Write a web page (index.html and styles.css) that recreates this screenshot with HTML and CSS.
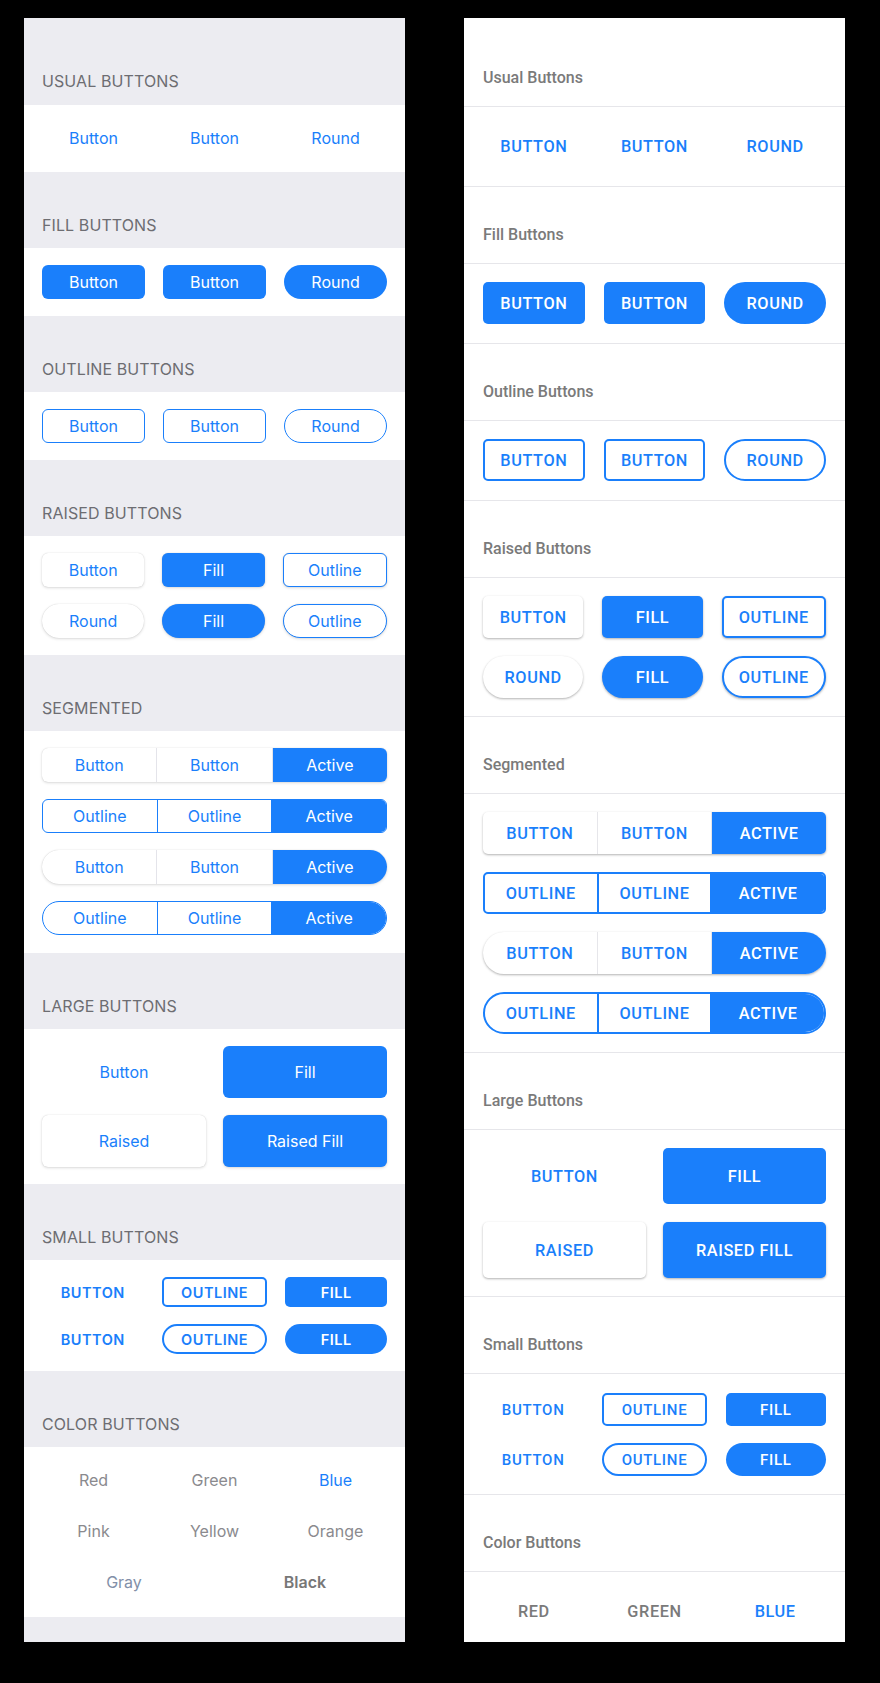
FILE: index.html
```html
<!DOCTYPE html>
<html>
<head>
<meta charset="utf-8">
<link rel="stylesheet" href="styles.css">
</head>
<body>
<div class="stage">
  <div class="panel ios">
    <div class="ititle first">Usual Buttons</div>
    <div class="iblock">
      <div class="row">
        <span class="ib">Button</span><span class="ib">Button</span><span class="ib round">Round</span>
      </div>
    </div>
    <div class="ititle">Fill Buttons</div>
    <div class="iblock pb">
      <div class="row">
        <span class="ib fill">Button</span><span class="ib fill">Button</span><span class="ib fill round">Round</span>
      </div>
    </div>
    <div class="ititle">Outline Buttons</div>
    <div class="iblock pb">
      <div class="row">
        <span class="ib outline">Button</span><span class="ib outline">Button</span><span class="ib outline round">Round</span>
      </div>
    </div>
    <div class="ititle">Raised Buttons</div>
    <div class="iblock pb">
      <div class="row">
        <span class="ib raised">Button</span><span class="ib raised fill">Fill</span><span class="ib raised outline">Outline</span>
      </div>
      <div class="row">
        <span class="ib raised round">Round</span><span class="ib raised fill round">Fill</span><span class="ib raised outline round">Outline</span>
      </div>
    </div>
    <div class="ititle">Segmented</div>
    <div class="iblock seg-block">
      <div class="iseg raised">
        <span class="is">Button</span><span class="is">Button</span><span class="is active">Active</span>
      </div>
      <div class="iseg outline">
        <span class="is">Outline</span><span class="is">Outline</span><span class="is active">Active</span>
      </div>
      <div class="iseg raised round">
        <span class="is">Button</span><span class="is">Button</span><span class="is active">Active</span>
      </div>
      <div class="iseg outline round">
        <span class="is">Outline</span><span class="is">Outline</span><span class="is active">Active</span>
      </div>
    </div>
    <div class="ititle">Large Buttons</div>
    <div class="iblock pb">
      <div class="row two">
        <span class="ib large">Button</span><span class="ib large fill">Fill</span>
      </div>
      <div class="row two">
        <span class="ib large raised">Raised</span><span class="ib large raised fill">Raised Fill</span>
      </div>
    </div>
    <div class="ititle">Small Buttons</div>
    <div class="iblock pb">
      <div class="row">
        <span class="ib small">Button</span><span class="ib small outline">Outline</span><span class="ib small fill">Fill</span>
      </div>
      <div class="row">
        <span class="ib small round">Button</span><span class="ib small outline round">Outline</span><span class="ib small fill round">Fill</span>
      </div>
    </div>
    <div class="ititle">Color Buttons</div>
    <div class="iblock color-block">
      <div class="row">
        <span class="ib c-gray">Red</span><span class="ib c-gray">Green</span><span class="ib">Blue</span>
      </div>
      <div class="row">
        <span class="ib c-gray">Pink</span><span class="ib c-gray">Yellow</span><span class="ib c-gray">Orange</span>
      </div>
      <div class="row two">
        <span class="ib c-bluegray">Gray</span><span class="ib c-black">Black</span>
      </div>
    </div>
  </div>

  <div class="panel md">
    <div class="mtitle first">Usual Buttons</div>
    <div class="mblock pb">
      <div class="row">
        <span class="mb">Button</span><span class="mb">Button</span><span class="mb round">Round</span>
      </div>
    </div>
    <div class="mtitle">Fill Buttons</div>
    <div class="mblock pb">
      <div class="row">
        <span class="mb fill">Button</span><span class="mb fill">Button</span><span class="mb fill round">Round</span>
      </div>
    </div>
    <div class="mtitle">Outline Buttons</div>
    <div class="mblock pb">
      <div class="row">
        <span class="mb outline">Button</span><span class="mb outline">Button</span><span class="mb outline round">Round</span>
      </div>
    </div>
    <div class="mtitle">Raised Buttons</div>
    <div class="mblock">
      <div class="row">
        <span class="mb raised">Button</span><span class="mb raised fill">Fill</span><span class="mb raised outline">Outline</span>
      </div>
      <div class="row">
        <span class="mb raised round">Round</span><span class="mb raised fill round">Fill</span><span class="mb raised outline round">Outline</span>
      </div>
    </div>
    <div class="mtitle">Segmented</div>
    <div class="mblock">
      <div class="mseg raised">
        <span class="ms">Button</span><span class="ms">Button</span><span class="ms active">Active</span>
      </div>
      <div class="mseg outline">
        <span class="ms">Outline</span><span class="ms">Outline</span><span class="ms active">Active</span>
      </div>
      <div class="mseg raised round">
        <span class="ms">Button</span><span class="ms">Button</span><span class="ms active">Active</span>
      </div>
      <div class="mseg outline round">
        <span class="ms">Outline</span><span class="ms">Outline</span><span class="ms active">Active</span>
      </div>
    </div>
    <div class="mtitle">Large Buttons</div>
    <div class="mblock">
      <div class="row two">
        <span class="mb large">Button</span><span class="mb large fill">Fill</span>
      </div>
      <div class="row two">
        <span class="mb large raised">Raised</span><span class="mb large raised fill">Raised Fill</span>
      </div>
    </div>
    <div class="mtitle">Small Buttons</div>
    <div class="mblock small-block">
      <div class="row">
        <span class="mb small">Button</span><span class="mb small outline">Outline</span><span class="mb small fill">Fill</span>
      </div>
      <div class="row">
        <span class="mb small round">Button</span><span class="mb small outline round">Outline</span><span class="mb small fill round">Fill</span>
      </div>
    </div>
    <div class="mtitle">Color Buttons</div>
    <div class="mblock last">
      <div class="row">
        <span class="mb c-gray">Red</span><span class="mb c-gray">Green</span><span class="mb">Blue</span>
      </div>
    </div>
  </div>
</div>
</body>
</html>
```

FILE: styles.css
```css
html, body {
  margin: 0;
  padding: 0;
  background: #000;
}

.stage {
  display: flex;
  gap: 59px;
  padding: 18px 35px 0 24px;
  height: 1683px;
  box-sizing: border-box;
}

.panel {
  width: 381px;
  height: 1624px;
  overflow: hidden;
  flex: none;
}

.row {
  display: flex;
  gap: 18px;
}

.row > * {
  flex: 1 1 0;
  min-width: 0;
}

/* ---------------- iOS panel ---------------- */
.ios {
  background: #ececf1;
  font-family: "Inter", "Liberation Sans", sans-serif;
}

.ititle {
  height: 76px;
  box-sizing: border-box;
  padding: 43px 18px 0;
  line-height: 20px;
  font-size: 16px;
  text-transform: uppercase;
  color: #6d6d72;
  letter-spacing: 0.1px;
}

.ititle.first {
  height: 87px;
  padding-top: 53px;
}

.iblock {
  background: #fff;
  padding: 16px 18px 17px;
  display: flex;
  flex-direction: column;
  gap: 17px;
}

.iblock.pb {
  padding-top: 17px;
}

.iblock.seg-block {
  padding: 17px 18px 18px;
}

.iblock.color-block {
  padding: 16px 18px 18px;
}

.row.two {
  gap: 17px;
}

.ib {
  height: 34px;
  box-sizing: border-box;
  display: flex;
  align-items: center;
  justify-content: center;
  font-size: 16px;
  color: #1a7ffb;
  border-radius: 6px;
  white-space: nowrap;
}

.ib.round { border-radius: 17px; }
.ib.fill { background: #1a7ffb; color: #fff; }
.ib.outline { border: 1px solid #1a7ffb; }
.ib.raised {
  box-shadow: 0 1px 3px rgba(0, 0, 0, 0.14), 0 0 1px rgba(0, 0, 0, 0.18);
}
.ib.raised:not(.fill) { background: #fff; }

.ib.large { height: 52px; }

.ib.small {
  height: 30px;
  font-size: 14.5px;
  font-weight: 600;
  text-transform: uppercase;
  letter-spacing: 0.5px;
  border-radius: 5px;
}
.ib.small.round { border-radius: 15px; }
.ib.small.outline { border-width: 2px; }

.ib.c-gray { color: #8a8a8e; }
.ib.c-bluegray { color: #8290a8; }
.ib.c-black { color: #777; font-weight: 600; }

.iseg {
  display: flex;
  height: 34px;
  border-radius: 6px;
  overflow: hidden;
  box-sizing: border-box;
}
.iseg.round { border-radius: 17px; }
.iseg.raised {
  box-shadow: 0 1px 3px rgba(0, 0, 0, 0.14), 0 0 1px rgba(0, 0, 0, 0.18);
  background: #fff;
}
.iseg.outline { border: 1px solid #1a7ffb; }

.is {
  flex: 1 1 0;
  display: flex;
  align-items: center;
  justify-content: center;
  font-size: 16px;
  color: #1a7ffb;
}
.iseg.raised .is + .is { border-left: 1px solid #e4e4ea; }
.iseg.outline .is + .is { border-left: 1px solid #1a7ffb; }
.is.active { background: #1a7ffb; color: #fff; }

/* ---------------- MD panel ---------------- */
.md {
  background: #fff;
  font-family: "Roboto", "Liberation Sans", sans-serif;
}

.mtitle {
  height: 76px;
  box-sizing: border-box;
  padding: 38px 19px 0;
  line-height: 20px;
  font-size: 16px;
  font-weight: 500;
  color: #7a7a7a;
}

.mtitle.first {
  height: 88px;
  padding-top: 50px;
}

.mblock {
  border-top: 1px solid #e6e6ea;
  border-bottom: 1px solid #e6e6ea;
  padding: 18px 19px;
  display: flex;
  flex-direction: column;
  gap: 18px;
}

.mblock.pb { padding-bottom: 19px; }
.mblock.small-block { padding-top: 19px; gap: 17px; }
.mblock.last { border-bottom: none; padding-bottom: 0; }

.mblock .row { gap: 19px; }
.mblock .row.two { gap: 17px; }

.mb {
  height: 42px;
  box-sizing: border-box;
  display: flex;
  align-items: center;
  justify-content: center;
  font-size: 16.3px;
  font-weight: 500;
  text-transform: uppercase;
  letter-spacing: 0.6px;
  color: #1a7ffb;
  border-radius: 5px;
  white-space: nowrap;
}
.mb.round { border-radius: 21px; }
.mb.fill { background: #1a7ffb; color: #fff; }
.mb.outline { border: 2px solid #1a7ffb; }
.mb.raised {
  box-shadow: 0 1px 3px rgba(0, 0, 0, 0.14), 0 1px 2px rgba(0, 0, 0, 0.18);
}
.mb.raised:not(.fill) { background: #fff; }
.mb.large { height: 56px; }
.mb.small {
  height: 33px;
  font-size: 15px;
  letter-spacing: 0.7px;
}
.mb.small.round { border-radius: 17px; }
.mb.c-gray { color: #7a7a7a; }

.mseg {
  display: flex;
  height: 42px;
  border-radius: 5px;
  overflow: hidden;
  box-sizing: border-box;
}
.mseg.round { border-radius: 21px; }
.mseg.raised {
  background: #fff;
  box-shadow: 0 1px 3px rgba(0, 0, 0, 0.14), 0 1px 2px rgba(0, 0, 0, 0.18);
}
.mseg.outline { border: 2px solid #1a7ffb; }

.ms {
  flex: 1 1 0;
  display: flex;
  align-items: center;
  justify-content: center;
  font-size: 16.3px;
  font-weight: 500;
  text-transform: uppercase;
  letter-spacing: 0.6px;
  color: #1a7ffb;
}
.mseg.raised .ms + .ms { border-left: 1px solid #e6e6ea; }
.mseg.outline .ms + .ms { border-left: 2px solid #1a7ffb; }
.ms.active { background: #1a7ffb; color: #fff; }
```
